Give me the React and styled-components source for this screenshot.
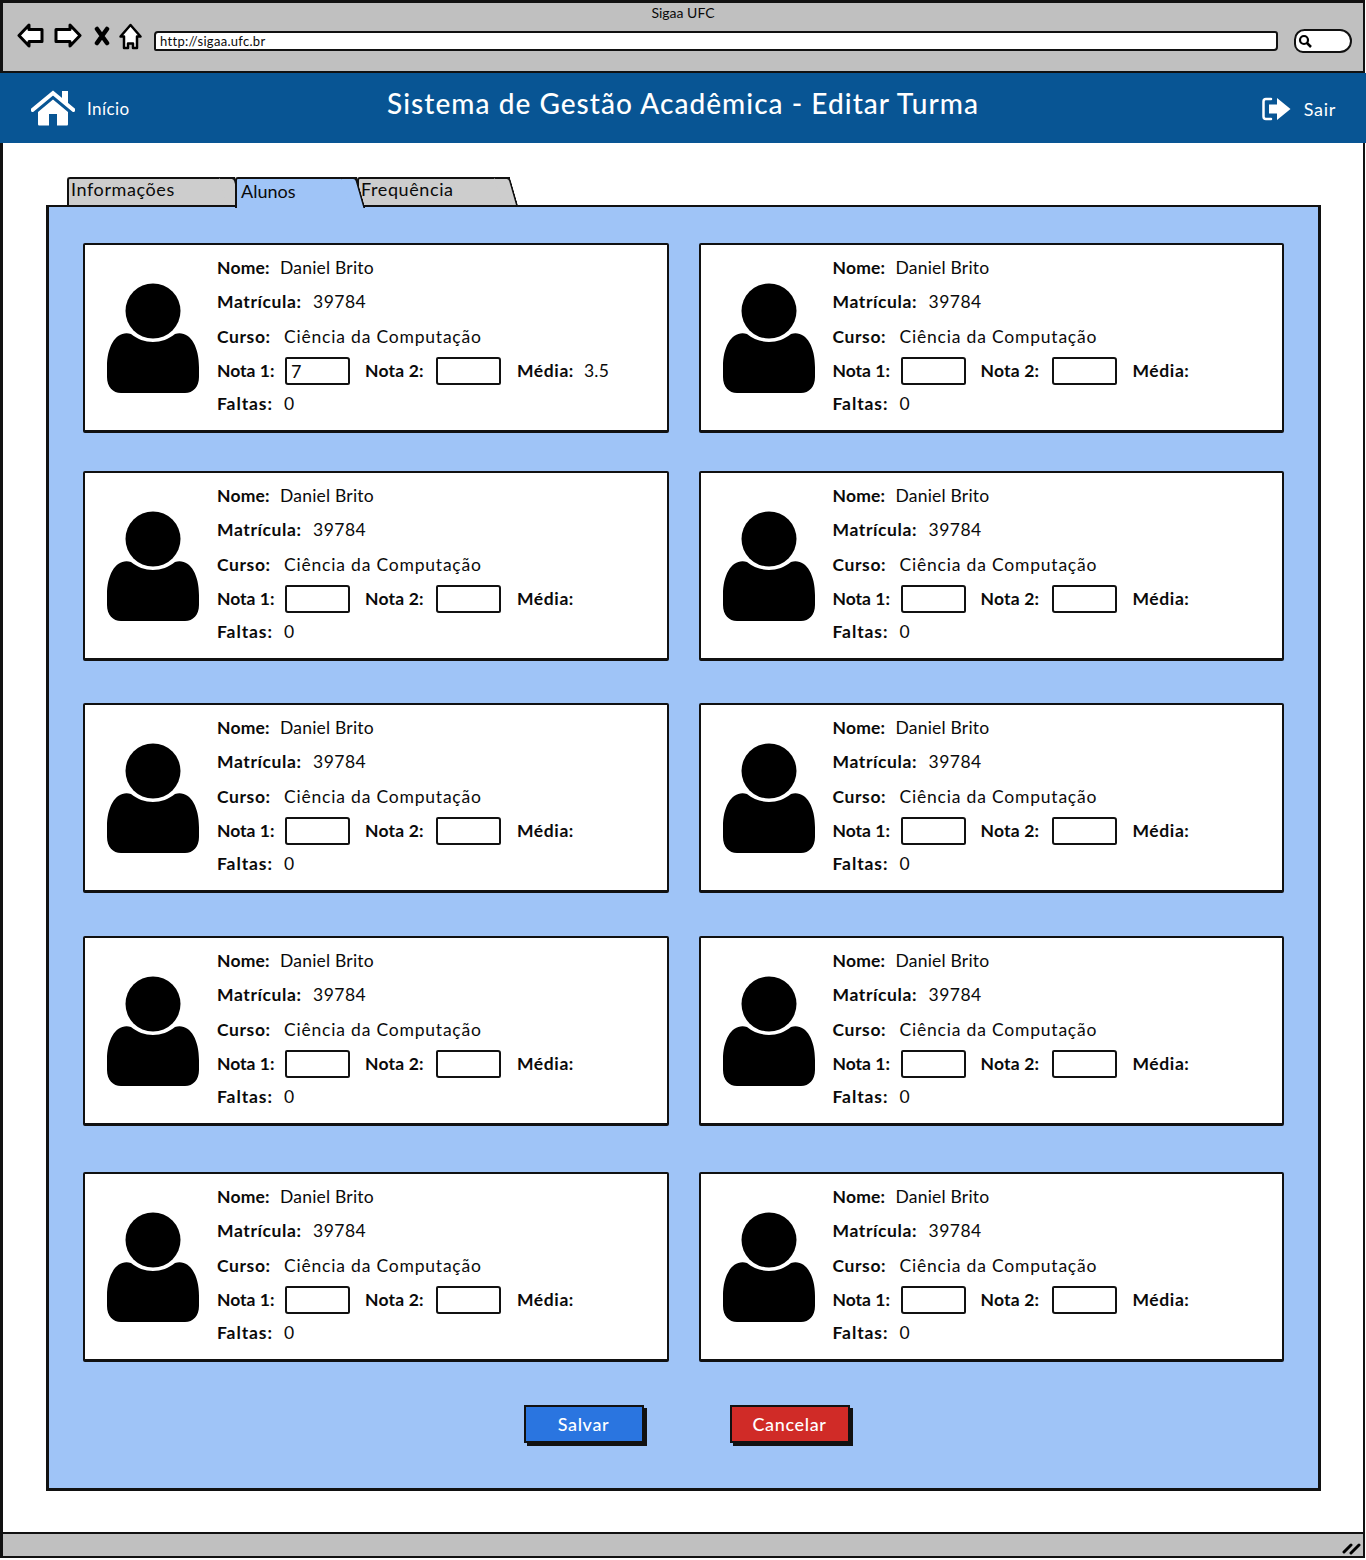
import styled, { createGlobalStyle } from 'styled-components'

const GlobalStyle = createGlobalStyle`
html, body {
  margin: 0;
  padding: 0;
  background: #fff;
}
* {
  box-sizing: border-box;
}
body {
  font-family: "Lato", "Open Sans", sans-serif;
  color: #0a0a0a;
}
`

const Window = styled.div`
width: 1365px;
height: 1558px;
border: 3px solid #111;
border-width: 3px 2px 2px 3px;
display: flex;
flex-direction: column;
background: #fff;
`

const Toolbar = styled.div`
height: 70px;
background: #c0c0c0;
border-bottom: 2px solid #111;
display: flex;
flex-direction: column;
flex: none;
`

const WindowTitle = styled.div`
height: 20px;
text-align: center;
font-size: 14px;
line-height: 20px;
`

const NavRow = styled.div`
height: 36px;
display: flex;
align-items: center;
gap: 12px;
padding: 0 11px 0 14px;
`

const NavIcons = styled.div`
display: flex;
align-items: center;
gap: 10px;
margin-bottom: 10px;
flex: none;
`

const CloseIcon = styled.svg`
width: 16px;
height: 20px;
margin: 0 -1px 0 2px;
`

const UrlBox = styled.div`
flex: 1;
height: 20px;
margin-right: 4px;
background: #fff;
border: 2px solid #111;
border-radius: 4px 3px 4px 2px;
font-size: 13px;
line-height: 16px;
padding-left: 4px;
letter-spacing: 0.3px;
`

const SearchPill = styled.div`
width: 58px;
height: 24px;
background: #fff;
border: 2px solid #111;
border-radius: 14px 16px 16px 12px;
display: flex;
align-items: center;
padding-left: 2px;
flex: none;
`

const Header = styled.header`
height: 70px;
margin: 0 -3px;
background: #085594;
color: #fff;
display: flex;
align-items: center;
flex: none;
`

const HomeLink = styled.div`
display: flex;
align-items: center;
gap: 12px;
padding-left: 31px;
width: 300px;
font-size: 17px;
letter-spacing: 0.4px;
`

const PageTitle = styled.h1`
flex: 1;
margin: 0 0 11px;
text-align: center;
font-size: 28px;
font-weight: 500;
letter-spacing: 1.05px;
`

const ExitLink = styled.div`
width: 300px;
display: flex;
align-items: center;
justify-content: flex-end;
gap: 13px;
padding: 2px 30px 0 0;
font-size: 18px;
letter-spacing: 0.7px;
`

const Body = styled.main`
flex: 1;
padding: 34px 42px 0 43px;
`

const Tabs = styled.div`
height: 28px;
display: flex;
padding-left: 21px;
position: relative;
z-index: 1;
`

const Tab = styled.div`
position: relative;
width: ${props => props.$width}px;
height: ${props => props.$active ? 31 : 28}px;
background: ${props => props.$active ? '#9fc4f7' : '#cdcdcd'};
border: 2px solid #111;
border-width: 2px 0 0 2px;
border-radius: 3px 0 0 0;
font-size: 18px;
letter-spacing: ${props => props.$active ? 0 : 0.6}px;
line-height: ${props => props.$active ? 25 : 20}px;
padding-left: ${props => props.$active ? 4 : 2}px;
z-index: ${props => props.$active ? 2 : 1};

&::after {
  content: '';
  position: absolute;
  top: -2px;
  right: -4px;
  bottom: 0;
  width: 14px;
  background: inherit;
  border: 2px solid #111;
  border-width: 2px 2px 0 0;
  border-radius: 0 4px 0 0;
  transform: skewX(16deg);
}
`

const Panel = styled.section`
height: 1286px;
background: #9fc4f7;
border: 3px solid #111;
border-top-width: 2px;
padding: 36px 34px 0 34px;
`

const CardRow = styled.div`
display: grid;
grid-template-columns: 1fr 1fr;
gap: 30px;
margin-top: ${props => props.$top}px;
`

const Card = styled.article`
height: 190px;
background: #fff;
border: 2px solid #111;
border-bottom-width: 3px;
border-radius: 2px;
display: flex;
padding: 5px 0 0 22px;
`

const Avatar = styled.svg`
width: 92px;
height: 110px;
margin: 33px 18px 0 0;
flex: none;
`

const Info = styled.div`
flex: 1;
display: grid;
grid-template-rows: 34px 34px 36px 32px 34px;
align-content: start;
font-size: 17.5px;
`

const Line = styled.div`
display: flex;
align-items: center;
`

const Label = styled.b`
font-weight: 700;
width: ${props => props.$width}px;
letter-spacing: ${props => props.$track ?? 0.6}px;
flex: none;
white-space: nowrap;
`

const Value = styled.span`
letter-spacing: ${props => props.$track}px;
white-space: nowrap;
`

const GradeBox = styled.div`
width: 65px;
height: 28px;
background: #fff;
border: 2px solid #111;
border-radius: 2px 3px 2px 3px;
margin: 2px ${props => props.$after}px 0 0;
padding-left: 4px;
line-height: 24px;
font-size: 18px;
flex: none;
`

const Actions = styled.div`
display: flex;
justify-content: center;
gap: 86px;
margin-top: 43px;
padding-left: 6px;
`

const Action = styled.button`
width: 120px;
height: 38px;
padding: 0;
background: ${props => props.$color};
color: #fff;
border: 2px solid #111;
box-shadow: 3px 3px 0 #111;
font-family: inherit;
font-size: 18px;
font-weight: 500;
letter-spacing: 0.65px;
`

const StatusBar = styled.footer`
height: 24px;
margin-top: auto;
background: #c0c0c0;
border-top: 2px solid #111;
display: flex;
justify-content: flex-end;
align-items: flex-end;
padding: 0 1px 1px 0;
flex: none;
`

const Outline = ({ width, height, d, weight = 3 }) => (
  <svg width={width} height={height} viewBox={`0 0 ${width} ${height}`}>
    <path d={d} fill="#fff" stroke="#000" strokeWidth={weight} strokeLinejoin="round" />
  </svg>
)

const UserIcon = () => (
  <Avatar viewBox="0 0 92 110">
    <circle cx="46" cy="28" r="27.5" fill="#000" />
    <path
      d="M24 51C30 56 38 59 46 59C54 59 62 56 68 51C82 47 92 62 92 84L92 94C92 104 86 110 78 110L14 110C6 110 0 104 0 94L0 84C0 62 10 47 24 51Z"
      fill="#000"
    />
  </Avatar>
)

const Student = ({ grade, average }) => (
  <Card>
    <UserIcon />
    <Info>
      <Line><Label $width={63} $track={0.2}>Nome:</Label><Value $track={0.2}>Daniel Brito</Value></Line>
      <Line><Label $width={96}>Matrícula:</Label><Value $track={0.5}>39784</Value></Line>
      <Line><Label $width={67}>Curso:</Label><Value $track={0.8}>Ciência da Computação</Value></Line>
      <Line>
        <Label $width={68} $track={0}>Nota 1:</Label>
        <GradeBox $after={15}>{grade}</GradeBox>
        <Label $width={71} $track={0.2}>Nota 2:</Label>
        <GradeBox $after={16} />
        <Label $width={67}>Média:</Label>
        <Value $track={0.2}>{average}</Value>
      </Line>
      <Line><Label $width={67} $track={0.9}>Faltas:</Label><Value $track={0.5}>0</Value></Line>
    </Info>
  </Card>
)

const rows = [0, 38, 42, 43, 46]

const App = () => {
  return (
    <>
      <GlobalStyle />
      <Window>
        <Toolbar>
          <WindowTitle>Sigaa UFC</WindowTitle>
          <NavRow>
            <NavIcons>
              <Outline width={27} height={26} d="M2 12.500L12 2V6.500H25V18.500H12V23Z" />
              <Outline width={28} height={26} d="M26 12.500L16 2V6.500H2V18.500H16V23Z" />
              <CloseIcon viewBox="0 0 16 20">
                <path d="M3 3L13 17M13 3L3 17" stroke="#000" strokeWidth="4.5" strokeLinecap="round" />
              </CloseIcon>
              <Outline width={23} height={27} weight={2.5} d="M11.500 2L21.500 13.500H18V25H14V20.500H9V25H5V13.500H1.500Z" />
            </NavIcons>
            <UrlBox>http://sigaa.ufc.br</UrlBox>
            <SearchPill>
              <svg width={14} height={14} viewBox="0 0 14 14">
                <circle cx="6" cy="6" r="4" fill="none" stroke="#000" strokeWidth="2.2" />
                <path d="M9 9L13 13" stroke="#000" strokeWidth="2.5" />
              </svg>
            </SearchPill>
          </NavRow>
        </Toolbar>

        <Header>
          <HomeLink>
            <svg width={44} height={36} viewBox="0 0 44 36">
              <path d="M1.500 20L22 3L42.500 20" fill="none" stroke="#fff" strokeWidth="4" strokeLinecap="round" />
              <path d="M31 1H37V14L31 9Z" fill="#fff" />
              <path d="M7 22L22 9.500L37 22V34C37 35 36.500 35.500 35.500 35.500H26V24H18V35.500H8.500C7.500 35.500 7 35 7 34Z" fill="#fff" />
            </svg>
            Início
          </HomeLink>
          <PageTitle>Sistema de Gestão Acadêmica - Editar Turma</PageTitle>
          <ExitLink>
            <svg width={29} height={24} viewBox="0 0 29 24">
              <path d="M9 2H4C2.500 2 1.500 3 1.500 4.500V19.500C1.500 21 2.500 22 4 22H9" fill="none" stroke="#fff" strokeWidth="2.500" strokeLinecap="round" />
              <path d="M7 7.500H15V1L28.500 12L15 23V16.500H7Z" fill="#fff" />
            </svg>
            Sair
          </ExitLink>
        </Header>

        <Body>
          <Tabs>
            <Tab $width={168}>Informações</Tab>
            <Tab $width={122} $active>Alunos</Tab>
            <Tab $width={153}>Frequência</Tab>
          </Tabs>
          <Panel>
            {rows.map((top, index) => (
              <CardRow key={index} $top={top}>
                <Student grade={index === 0 ? '7' : ''} average={index === 0 ? '3.5' : ''} />
                <Student />
              </CardRow>
            ))}
            <Actions>
              <Action $color="#2a75e0">Salvar</Action>
              <Action $color="#d02b27">Cancelar</Action>
            </Actions>
          </Panel>
        </Body>

        <StatusBar>
          <svg width={20} height={16} viewBox="0 0 20 16">
            <path d="M2 13L9 6M9 14L17 6" stroke="#000" strokeWidth="3" strokeLinecap="round" />
          </svg>
        </StatusBar>
      </Window>
    </>
  )
}

export default App
